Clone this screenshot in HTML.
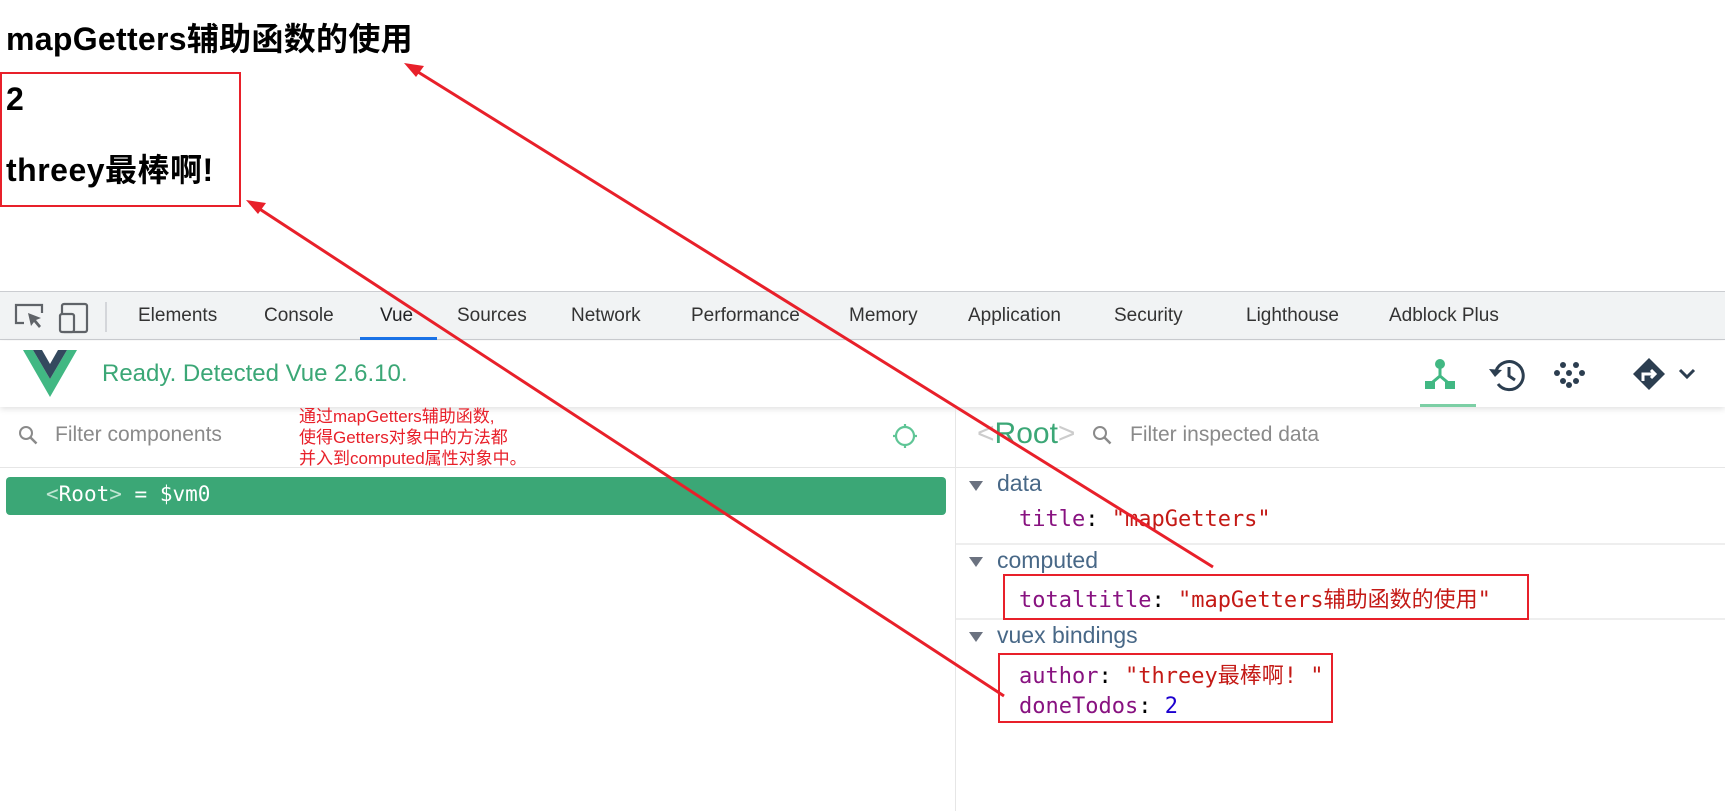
<!DOCTYPE html>
<html><head><meta charset="utf-8"><style>
*{margin:0;padding:0;box-sizing:border-box}
body{width:1725px;height:811px;position:relative;background:#fff;overflow:hidden;font-family:"Liberation Sans","Noto Sans CJK SC",sans-serif}
.a{position:absolute;white-space:nowrap}
.tab{position:absolute;top:305px;font-size:19px;color:#333;font-family:"Liberation Sans","Noto Sans CJK SC",sans-serif}
.mono{font-family:"DejaVu Sans Mono","Noto Sans CJK SC",monospace;font-size:22px}
.k{color:#881280}.s{color:#c41a16}.n{color:#1c00cf}
.hd{font-size:23px;color:#486887}
.tri{position:absolute;width:0;height:0;border-left:7px solid transparent;border-right:7px solid transparent;border-top:10px solid #6b7280}
</style></head><body>
<div class="a" style="left:6px;top:14px;font-size:32px;font-weight:bold;color:#000;letter-spacing:0.3px">mapGetters辅助函数的使用</div>
<div class="a" style="left:0;top:72px;width:241px;height:135px;border:2px solid #e8202a"></div>
<div class="a" style="left:6px;top:81px;font-size:32px;font-weight:bold">2</div>
<div class="a" style="left:6px;top:145px;font-size:32px;font-weight:bold;letter-spacing:0.5px">threey最棒啊!</div>

<div class="a" style="left:0;top:291px;width:1725px;height:49px;background:#f1f3f4;border-top:1px solid #cbcdd1;border-bottom:1px solid #cbcdd1"></div>
<svg class="a" style="left:12px;top:300px" width="100" height="36" viewBox="0 0 100 36">
<path d="M12 23H4V5h26v8" fill="none" stroke="#5f6368" stroke-width="2.2"/>
<path d="M16 13l13 5-5 2 5 6-2 2-5-6-3 4z" fill="#5f6368"/>
<rect x="50" y="4" width="25" height="28" rx="2" fill="none" stroke="#5f6368" stroke-width="2.2"/>
<rect x="48" y="14" width="14" height="18" rx="2" fill="#f1f3f4" stroke="#5f6368" stroke-width="2.2"/>
<line x1="94" y1="2" x2="94" y2="32" stroke="#cbcdd1" stroke-width="1.5"/>
</svg>
<div class="tab" style="left:138px">Elements</div>
<div class="tab" style="left:264px">Console</div>
<div class="tab" style="left:380px;color:#202124">Vue</div>
<div class="a" style="left:360px;top:337px;width:77px;height:3px;background:#1a73e8"></div>
<div class="tab" style="left:457px">Sources</div>
<div class="tab" style="left:571px">Network</div>
<div class="tab" style="left:691px">Performance</div>
<div class="tab" style="left:849px">Memory</div>
<div class="tab" style="left:968px">Application</div>
<div class="tab" style="left:1114px">Security</div>
<div class="tab" style="left:1246px">Lighthouse</div>
<div class="tab" style="left:1389px">Adblock Plus</div>

<div class="a" style="left:0;top:341px;width:1725px;height:66px;background:#fff;box-shadow:0 2px 6px rgba(0,0,0,.12)"></div>
<svg class="a" style="left:23px;top:350px" width="54" height="47" viewBox="0 0 54 47"><path d="M0 0h10l17 29L44 0h10L27 47z" fill="#41b883"/><path d="M10 0h9l8 14 8-14h9L27 29z" fill="#34495e"/></svg>
<div class="a" style="left:102px;top:360px;font-size:24px;color:#3ba776">Ready. Detected Vue 2.6.10.</div>
<svg class="a" style="left:1420px;top:355px" width="290" height="52" viewBox="0 0 290 52">
<circle cx="20" cy="9" r="5" fill="#41b883"/><path d="M20 9v12M20 21l-12 10M20 21l12 10" stroke="#41b883" stroke-width="3" fill="none"/><rect x="5" y="26" width="10" height="8" fill="#41b883"/><rect x="25" y="26" width="10" height="8" fill="#41b883"/>
<rect x="-10" y="49" width="66" height="3" fill="#7ccfa5"/>
<path d="M76 16a14 14 0 1 1 2 13" stroke="#2c3e50" stroke-width="3" fill="none"/><path d="M69 14l6 8 7-7z" fill="#2c3e50"/><path d="M89 12v9l6 4" stroke="#2c3e50" stroke-width="3" fill="none"/>
<g fill="#2c3e50"><circle cx="143" cy="10" r="3"/><circle cx="156" cy="10" r="3"/><circle cx="137" cy="18" r="3"/><circle cx="149" cy="18" r="3"/><circle cx="162" cy="18" r="3"/><circle cx="143" cy="26" r="3"/><circle cx="156" cy="26" r="3"/><circle cx="149" cy="30" r="3"/></g>
<path d="M229 3l16 16-16 16-16-16z" fill="#2c3e50"/><path d="M223 26v-7h11M231 15l4 4-4 4" stroke="#fff" stroke-width="3" fill="none"/>
<path d="M260 15l7 7 7-7" stroke="#2c3e50" stroke-width="3" fill="none"/>
</svg>

<svg class="a" style="left:18px;top:425px" width="22" height="22" viewBox="0 0 22 22"><circle cx="8" cy="8" r="6" fill="none" stroke="#8a8a8a" stroke-width="2"/><path d="M12.5 12.5l6 6" stroke="#8a8a8a" stroke-width="2.5"/></svg>
<div class="a" style="left:55px;top:423px;font-size:21px;color:#8a8a8a">Filter components</div>
<div class="a" style="left:299px;top:406px;font-size:17px;line-height:21px;color:#e8202a">通过mapGetters辅助函数,<br>使得Getters对象中的方法都<br>并入到computed属性对象中。</div>
<svg class="a" style="left:890px;top:421px" width="32" height="32" viewBox="0 0 32 32"><circle cx="15" cy="15" r="9" fill="none" stroke="#5fc596" stroke-width="2.2"/><path d="M15 3v4M15 23v4M3 15h4M23 15h4" stroke="#5fc596" stroke-width="2.2"/></svg>
<div class="a" style="left:0;top:467px;width:956px;height:1px;background:#e6e6e6"></div>
<div class="a" style="left:6px;top:477px;width:940px;height:38px;background:#3ba776;border-radius:4px"></div>
<div class="a mono" style="left:46px;top:482px;color:#fff;font-size:21px"><span style="color:#bfe5d2">&lt;</span>Root<span style="color:#bfe5d2">&gt;</span> = $vm0</div>
<div class="a" style="left:955px;top:407px;width:1px;height:404px;background:#e6e6e6"></div>

<div class="a" style="left:977px;top:417px;font-size:30px;color:#3ba776"><span style="color:#ccc">&lt;</span>Root<span style="color:#ccc">&gt;</span></div>
<svg class="a" style="left:1092px;top:425px" width="22" height="22" viewBox="0 0 22 22"><circle cx="8" cy="8" r="6" fill="none" stroke="#8a8a8a" stroke-width="2"/><path d="M12.5 12.5l6 6" stroke="#8a8a8a" stroke-width="2.5"/></svg>
<div class="a" style="left:1130px;top:423px;font-size:21px;color:#8a8a8a">Filter inspected data</div>
<div class="a" style="left:956px;top:467px;width:769px;height:1px;background:#e6e6e6"></div>
<div class="tri" style="left:969px;top:481px"></div><div class="a hd" style="left:997px;top:470px">data</div>
<div class="a mono" style="left:1019px;top:507px"><span class="k">title</span>: <span class="s">"mapGetters"</span></div>
<div class="a" style="left:956px;top:543px;width:769px;height:2px;background:#eee"></div>
<div class="tri" style="left:969px;top:557px"></div><div class="a hd" style="left:997px;top:547px">computed</div>
<div class="a mono" style="left:1019px;top:582px"><span class="k">totaltitle</span>: <span class="s">"mapGetters辅助函数的使用"</span></div>
<div class="a" style="left:956px;top:618px;width:769px;height:2px;background:#eee"></div>
<div class="tri" style="left:969px;top:632px"></div><div class="a hd" style="left:997px;top:622px">vuex bindings</div>
<div class="a mono" style="left:1019px;top:658px"><span class="k">author</span>: <span class="s">"threey最棒啊! "</span></div>
<div class="a mono" style="left:1019px;top:694px"><span class="k">doneTodos</span>: <span class="n">2</span></div>
<div class="a" style="left:1003px;top:574px;width:526px;height:46px;border:2px solid #e8202a"></div>
<div class="a" style="left:998px;top:653px;width:335px;height:70px;border:2px solid #e8202a"></div>

<svg class="a" style="left:0;top:0" width="1725" height="811">
<line x1="1213" y1="567" x2="410" y2="67" stroke="#e8202a" stroke-width="3"/>
<path d="M404 63l20 3-8 11z" fill="#e8202a"/>
<line x1="1004" y1="696" x2="252" y2="204" stroke="#e8202a" stroke-width="3"/>
<path d="M246 200l20 3-8 11z" fill="#e8202a"/>
</svg>
</body></html>
